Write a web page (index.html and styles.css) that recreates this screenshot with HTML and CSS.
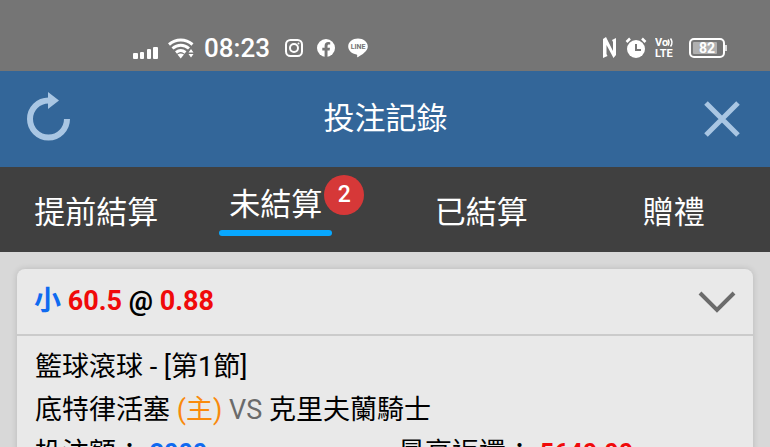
FILE: index.html
```
<!DOCTYPE html>
<html lang="zh-Hant">
<head>
  <meta charset="UTF-8" />
  <meta name="viewport" content="width=device-width, initial-scale=1.0" />
  <title>投注記錄</title>
  <link rel="stylesheet" href="styles.css">
</head>

<body>
  <!-- Status bar -->
  <div class="status-bar">
    <div class="status-left">
      <svg class="icon-signal" width="26" height="14" viewBox="0 0 26 14" fill="#fff">
        <rect x="0" y="8" width="5" height="6" rx="1" />
        <rect x="7" y="7" width="4" height="7" rx="1" />
        <rect x="14" y="4" width="4" height="10" rx="1" />
        <rect x="20" y="2" width="5" height="12" rx="1" />
      </svg>
      <svg class="icon-wifi" width="26" height="21" viewBox="0 0 26 21">
        <g fill="none" stroke="#fff" stroke-width="3">
          <path d="M1 6.500C8 .5 17.500 .5 24.500 6.500" />
          <path d="M4.500 10.500C9.500 6 16 6 21 10.500" />
          <path d="M8 14.500C11 12 14.500 12 17.500 14.500" />
        </g>
        <path d="M9.500 16.500q3.200-2 6.500 0L12.700 20.500z" fill="#fff" />
        <path d="M20.500 14.500l2.500-3.500 2.500 3.500zM20.500 16l2.500 3.500 2.500-3.500z" fill="#fff" />
      </svg>
      <span class="clock">08:23</span>
      <svg class="icon-app" width="20" height="20" viewBox="0 0 20 20" fill="none" stroke="#fff" stroke-width="2">
        <rect x="2" y="2" width="16" height="16" rx="4.500" />
        <circle cx="10" cy="10" r="4" />
        <circle cx="14.500" cy="5.500" r="1" fill="#fff" stroke="none" />
      </svg>
      <svg class="icon-app" width="20" height="20" viewBox="0 0 20 20">
        <circle cx="10" cy="10" r="9" fill="#fff" />
        <path d="M8.600 19v-6.500H6.300V9.800h2.300V7.900c0-2.500 1.400-3.800 3.600-3.800l2 .2v2.300H13c-1.200 0-1.500.7-1.500 1.500v1.700H14l-.4 2.700h-2.100V19z" fill="#757575" />
      </svg>
      <svg class="icon-app" width="20" height="20" viewBox="0 0 20 20">
        <path d="M10 .5C4.700.5.2 4 .2 8.500c0 4 3.500 7.300 8.300 7.900.9.200.8.700.6 2.100 0 .6.300.9 1 .5C14 16.800 19.800 13 19.800 8.500 19.800 4 15.300.5 10 .5z" fill="#fff" />
        <text x="10" y="11" class="line-text">LINE</text>
      </svg>
    </div>
    <div class="status-right">
      <svg width="14" height="22" viewBox="0 0 14 22" fill="#fff">
        <path d="M0 2L3 0 10 14V5l-1-2 4-2v17l-2.500 3L3.500 8v9l1 2L0 21z" />
      </svg>
      <svg width="22" height="22" viewBox="0 0 22 22" fill="none">
        <circle cx="11" cy="12" r="9" fill="#fff" />
        <path d="M1.500 5l3.500-3.500M20.500 5L17 1.500" stroke="#fff" stroke-width="2.500" />
        <path d="M11 7v6h5" stroke="#757575" stroke-width="2" />
      </svg>
      <svg width="20" height="22" viewBox="0 0 20 22">
        <text x="0" y="9" class="volte-text">Vo</text>
        <path d="M13 2.500q2 3 0 6M15.500 1.500q3 4 0 8" fill="none" stroke="#fff" stroke-width="1.500" />
        <text x="0" y="20" class="volte-text">LTE</text>
      </svg>
      <svg class="icon-battery" width="38" height="20" viewBox="0 0 38 20">
        <rect x="1" y="1" width="34" height="18" rx="4" fill="none" stroke="#fff" stroke-width="2" />
        <rect x="4" y="4" width="24" height="12" rx="1" fill="#b0b0b0" />
        <path d="M37 7v6" stroke="#fff" stroke-width="1.500" />
        <text x="18" y="15" class="battery-text">82</text>
      </svg>
    </div>
  </div>

  <!-- Header -->
  <header class="header">
    <button type="button" class="icon-btn refresh" aria-label="重新整理">
      <svg width="44" height="50" viewBox="0 0 44 50">
        <path d="M40 28A18.500 18.500 0 1 1 21.500 9.500" fill="none" stroke="#a9c6e3" stroke-width="6" />
        <path d="M21 1l11 8.500L21 18z" fill="#a9c6e3" />
      </svg>
    </button>
    <h1>投注記錄</h1>
    <button type="button" class="icon-btn close" aria-label="關閉">
      <svg width="36" height="36" viewBox="0 0 36 36">
        <path d="M2 2l32 32M34 2L2 34" stroke="#a9c6e3" stroke-width="5" />
      </svg>
    </button>
  </header>

  <!-- Tabs -->
  <nav class="tabs">
    <button type="button" class="tab">提前結算</button>
    <button type="button" class="tab active">
      <span class="tab-label">未結算<span class="badge">2</span></span>
    </button>
    <button type="button" class="tab">已結算</button>
    <button type="button" class="tab">贈禮</button>
  </nav>

  <!-- Bet list -->
  <main class="content">
    <section class="card">
      <div class="card-head">
        <h2><span class="pick">小</span> <span class="odds">60.5</span> @ <span class="odds">0.88</span></h2>
        <button type="button" class="icon-btn" aria-label="展開">
          <svg width="38" height="22" viewBox="0 0 38 22">
            <path d="M2 2l17 17L36 2" fill="none" stroke="#6b6b6b" stroke-width="4" />
          </svg>
        </button>
      </div>
      <div class="card-body">
        <p>籃球滾球 - [第1節]</p>
        <p>底特律活塞 <span class="home">(主)</span> <span class="vs">VS</span> 克里夫蘭騎士</p>
        <div class="amounts">
          <p>投注額： <span class="stake">3000</span></p>
          <p>最高返還： <span class="payout">5640.00</span></p>
        </div>
      </div>
    </section>
  </main>
</body>
</html>
```

FILE: styles.css
```
:root {
  --status-bg: #757575;
  --header-blue: #336699;
  --tab-bg: #404040;
  --page-bg: #d8d8d8;
  --card-bg: #e9e9e9;
  --accent: #08a8ff;
  --blue: #0f6af0;
  --red: #f00a0a;
}

* {
  box-sizing: border-box;
}

body {
  font-family: Roboto, "Noto Sans CJK TC", sans-serif;
  margin: 0;
  height: 100vh;
  overflow: hidden;
  background: var(--page-bg);
  color: #000;
}

h1, h2, p {
  margin: 0;
}

button {
  font-family: inherit;
  background: none;
  border: none;
  padding: 0;
  cursor: pointer;
}

svg {
  display: block;
}

/* status bar */
.status-bar {
  display: flex;
  justify-content: space-between;
  align-items: flex-end;
  height: 71px;
  padding: 0 43px 8px 133px;
  background: var(--status-bg);
  color: #fff;
}

.status-left,
.status-right {
  display: flex;
  align-items: center;
  height: 30px;
}

.status-right {
  gap: 8px;
}

.icon-signal {
  margin-top: 7px;
}

.icon-wifi {
  margin: 0 10px 0 9px;
}

.clock {
  font-size: 26px;
  line-height: 30px;
  font-weight: 500;
  margin-right: 2px;
}

.icon-app {
  margin-left: 12px;
}

.icon-battery {
  margin-left: 6px;
}

.line-text {
  font: 700 7px Roboto, sans-serif;
  fill: var(--status-bg);
  text-anchor: middle;
}

.volte-text {
  font: 700 11px Roboto, sans-serif;
  fill: #fff;
}

.battery-text {
  font: 700 14px Roboto, sans-serif;
  fill: #fff;
  text-anchor: middle;
}

/* header */
.header {
  display: flex;
  justify-content: space-between;
  align-items: center;
  height: 96px;
  padding: 0 30px 0 27px;
  background: var(--header-blue);
}

.refresh {
  padding-bottom: 6px;
}

.header h1 {
  padding: 0 4px 0 0;
  color: #fff;
  font-size: 31px;
  font-weight: 400;
  line-height: 44px;
}

/* tabs */
.tabs {
  display: grid;
  grid-template-columns: repeat(4, 1fr);
  height: 85px;
  background: var(--tab-bg);
}

.tab {
  padding-top: 6px;
  color: #fff;
  font-size: 31px;
  line-height: 44px;
}

.tab.active {
  padding-top: 0;
}

.tab-label {
  position: relative;
  display: inline-block;
  margin-right: 26px;
}

.tab-label::after {
  content: "";
  display: block;
  height: 6px;
  margin: 3px -10px 0;
  border-radius: 3px;
  background: var(--accent);
}

.badge {
  position: absolute;
  top: -8px;
  right: -42px;
  width: 40px;
  height: 40px;
  border-radius: 50%;
  background: #d63838;
  font-size: 23px;
  font-weight: 500;
  line-height: 40px;
  text-align: center;
}

/* bet card */
.content {
  padding: 17px;
}

.card {
  background: var(--card-bg);
  border-radius: 8px;
  box-shadow: 0 0 6px rgba(0, 0, 0, 0.15);
}

.card-head {
  display: flex;
  justify-content: space-between;
  align-items: center;
  height: 67px;
  padding: 0 17px;
  border-bottom: 2px solid #cbcbcb;
}

.card-head h2 {
  padding-bottom: 6px;
  font-size: 27px;
  font-weight: 700;
}

.pick,
.stake {
  color: var(--blue);
}

.odds,
.payout {
  color: var(--red);
}

.card-body {
  padding: 10px 18px;
  font-size: 27px;
  line-height: 43px;
}

.home {
  color: #f98a0c;
}

.vs {
  color: #6b6b6b;
}

.amounts {
  display: grid;
  grid-template-columns: 363px 1fr;
}

.stake,
.payout {
  font-size: 25px;
  font-weight: 700;
}
```
